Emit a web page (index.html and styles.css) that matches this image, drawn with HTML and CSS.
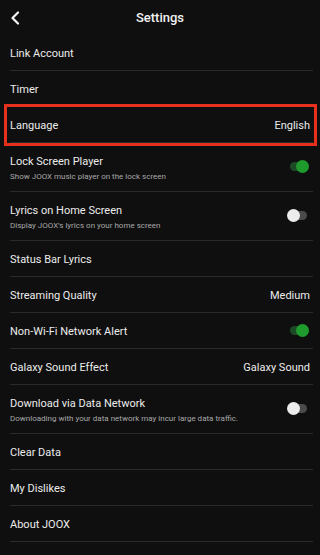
FILE: index.html
```html
<!DOCTYPE html>
<html>
<head>
<meta charset="utf-8">
<link rel="stylesheet" href="styles.css">
</head>
<body>
<div class="screen">
  <header class="topbar">
    <svg class="back" width="10" height="14" viewBox="0 0 10 14"><path d="M8 1.5 L2.5 7 L8 12.5" fill="none" stroke="#f2f2f2" stroke-width="2.2" stroke-linecap="round" stroke-linejoin="round"/></svg>
    <h1 class="title">Settings</h1>
  </header>
  <ul class="list">
    <li class="row"><span class="label">Link Account</span></li>
    <li class="row"><span class="label">Timer</span></li>
    <li class="row highlight"><span class="label">Language</span><span class="value">English</span></li>
    <li class="row double"><div class="texts"><span class="label">Lock Screen Player</span><span class="sub">Show JOOX music player on the lock screen</span></div><span class="toggle on"></span></li>
    <li class="row double"><div class="texts"><span class="label">Lyrics on Home Screen</span><span class="sub">Display JOOX's lyrics on your home screen</span></div><span class="toggle"></span></li>
    <li class="row"><span class="label">Status Bar Lyrics</span></li>
    <li class="row"><span class="label">Streaming Quality</span><span class="value">Medium</span></li>
    <li class="row"><span class="label">Non-Wi-Fi Network Alert</span><span class="toggle on"></span></li>
    <li class="row"><span class="label">Galaxy Sound Effect</span><span class="value">Galaxy Sound</span></li>
    <li class="row double"><div class="texts"><span class="label">Download via Data Network</span><span class="sub">Downloading with your data network may incur large data traffic.</span></div><span class="toggle"></span></li>
    <li class="row"><span class="label">Clear Data</span></li>
    <li class="row"><span class="label">My Dislikes</span></li>
    <li class="row"><span class="label">About JOOX</span></li>
  </ul>
</div>
</body>
</html>
```
FILE: styles.css
```css
* { box-sizing: border-box; }
html, body { margin: 0; padding: 0; background: #0f0f0f; }
body { font-family: Roboto, "Noto Sans", sans-serif; color: #ececec; width: 320px; height: 555px; overflow: hidden; }
.screen { width: 320px; }
.topbar { height: 35px; position: relative; display: flex; align-items: center; justify-content: center; }
.back { position: absolute; left: 10px; top: 11px; }
.title { margin: 0; font-size: 13px; font-weight: 500; color: #f2f2f2; }
.list { list-style: none; margin: 0 7px 0 10px; padding: 0; }
.row { height: 36px; border-bottom: 1px solid #2a2a2a; display: flex; align-items: center; justify-content: space-between; padding-right: 3px; padding-top: 3px; position: relative; }
.row.double { height: 49px; align-items: flex-start; padding-top: 12px; }
.label { font-size: 11px; line-height: 14px; color: #ececec; }
.value { font-size: 11px; line-height: 14px; color: #ececec; }
.texts { display: flex; flex-direction: column; gap: 2px; }
.sub { font-size: 8px; line-height: 12px; color: #a8a8a8; }
.highlight::before { content: ""; position: absolute; left: -6px; right: -4px; top: -3px; bottom: -4px; border: 3px solid #e8311c; }
.toggle { width: 22px; height: 12px; position: relative; margin-right: 1px; }
.row:not(.double) .toggle { margin-top: -3px; }
.double .toggle { margin-top: 6px; }
.toggle::before { content: ""; position: absolute; left: 3px; right: 2px; top: 1px; height: 9px; border-radius: 5px; background: #4a4a4a; }
.toggle::after { content: ""; position: absolute; left: 0; top: -1px; width: 13px; height: 13px; border-radius: 50%; background: #ececec; }
.toggle.on::before { background: #1c4a27; }
.toggle.on::after { left: auto; right: 0; background: #1f9a2c; }
```
